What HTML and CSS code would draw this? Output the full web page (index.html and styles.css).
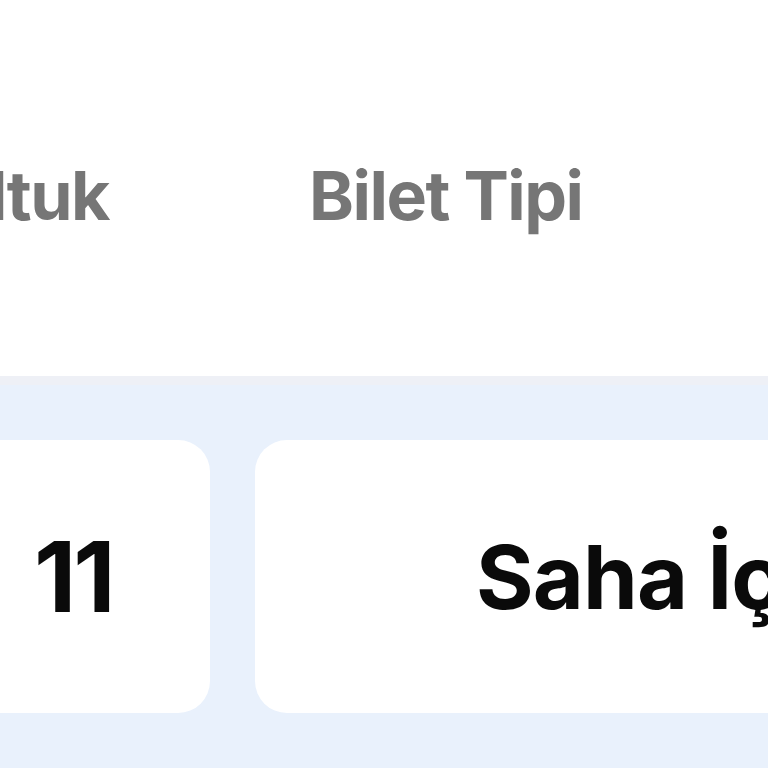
FILE: index.html
```html
<!DOCTYPE html>
<html lang="tr">
<head>
<meta charset="utf-8">
<link rel="stylesheet" href="styles.css">
</head>
<body>
<div class="page">
  <div class="head">
    <div class="labels">
      <span class="label">Koltuk</span>
      <span class="label">Bilet Tipi</span>
    </div>
  </div>
  <div class="band">
    <div class="cards">
      <div class="card card-seat"><span class="value value-num">11</span></div>
      <div class="card card-type"><span class="value">Saha İçi</span></div>
    </div>
  </div>
</div>
</body>
</html>
```
FILE: styles.css
```css
html, body {
  margin: 0;
  padding: 0;
  background: #ffffff;
}
body {
  width: 768px;
  height: 768px;
  overflow: hidden;
  font-family: Inter, "Noto Sans", "Liberation Sans", sans-serif;
}
.page {
  display: flex;
  flex-direction: column;
  height: 768px;
}
.head {
  height: 376px;
  flex: none;
  box-sizing: border-box;
  padding-top: 161px;
}
.labels {
  display: flex;
  gap: 200px;
  margin-left: -96px;
}
.label {
  font-size: 68px;
  line-height: 1;
  font-weight: 700;
  letter-spacing: -1.5px;
  color: #767676;
  white-space: nowrap;
}
.band {
  flex: 1;
  background: #e9f1fc;
  border-top: 9px solid #eef0f6;
  padding-top: 55px;
}
.cards {
  display: flex;
  gap: 45px;
}
.card {
  flex: none;
  height: 273px;
  background: #ffffff;
  border-radius: 32px;
  display: flex;
  align-items: center;
  box-sizing: border-box;
  white-space: nowrap;
}
.card-seat {
  width: 300px;
  margin-left: -90px;
  padding-left: 124px;
}
.card-type {
  width: 700px;
  padding-left: 221px;
}
.value {
  font-size: 88px;
  line-height: 1;
  font-weight: 700;
  letter-spacing: -0.8px;
  color: #0a0a0a;
}
.value-num {
  font-size: 98px;
  letter-spacing: -3px;
}
```
